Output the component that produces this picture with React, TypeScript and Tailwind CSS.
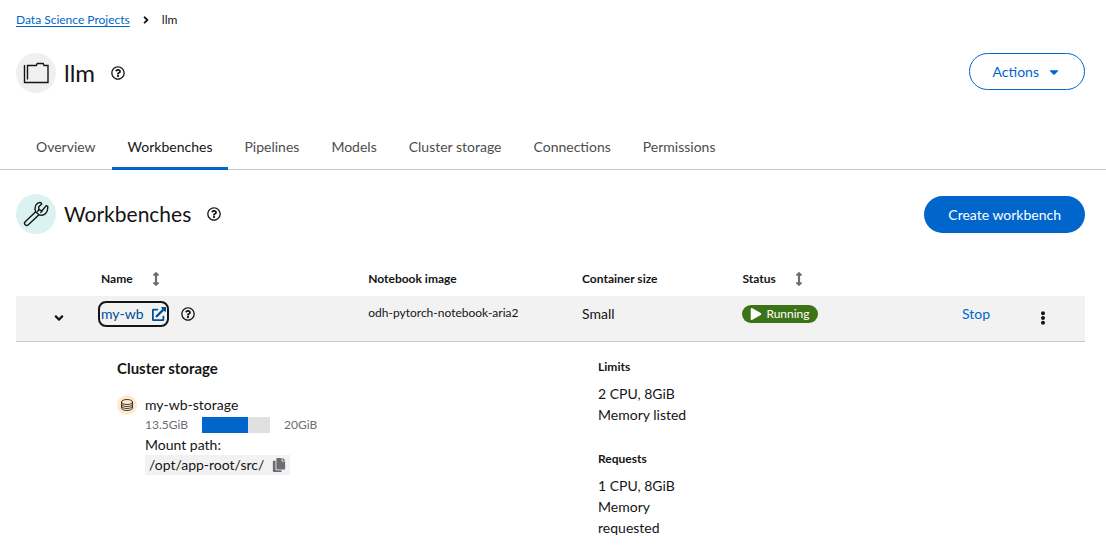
import React, { useState } from 'react';
import {
  FaAngleDown,
  FaAngleRight,
  FaArrowsAltV,
  FaCaretDown,
  FaCopy,
  FaEllipsisV,
  FaExternalLinkAlt,
  FaPlay,
  FaRegQuestionCircle,
} from 'react-icons/fa';

const tabs = [
  'Overview',
  'Workbenches',
  'Pipelines',
  'Models',
  'Cluster storage',
  'Connections',
  'Permissions',
];

const storage = {
  name: 'my-wb-storage',
  used: 13.5,
  size: 20,
  path: '/opt/app-root/src/',
};

const ProjectIcon: React.FC = () => (
  <svg viewBox="0 0 26 26" className="h-[26px] w-[26px]" fill="none" stroke="#151515" strokeWidth="1.4" aria-hidden="true">
    <path d="M1.500 5v17.500h23.500V5.500h-4l-.8-2h-6l-.8 2h-8.900v14" />
  </svg>
);

const WrenchIcon: React.FC = () => (
  <svg viewBox="0 0 26 26" className="h-[26px] w-[26px]" fill="none" stroke="#151515" strokeWidth="1.4" strokeLinejoin="round" strokeLinecap="round" aria-hidden="true">
    <path d="M12.700 10.800 2.200 20.800a2.100 2.100 0 0 0 3.100 3L16 13.800c2.400.8 4.900.4 6.600-1.300s2.400-4.200 2.100-7.100l-1.500-.8-4.200 5.200-3-1.200-.4-2.600 3-3-.3-1.200c-1.300-.6-3.100-.2-4.300 1-2 1.700-2.500 4.700-1.300 8l3.300 3" />
    <path d="m16 8.600-1.300 1.700M19 9.800l-1.200 1.600" />
  </svg>
);

const StorageIcon: React.FC = () => (
  <svg viewBox="0 0 14 14" className="h-3.5 w-3.5" fill="none" stroke="#151515" strokeWidth="0.8" aria-hidden="true">
    <ellipse cx="7" cy="4" rx="5.5" ry="2.5" />
    <path d="M1.500 4v6c0 1.400 2.500 2.500 5.500 2.500s5.500-1.100 5.500-2.500V4M1.500 6c0 1.400 2.500 2.500 5.500 2.500s5.500-1.100 5.500-2.500M1.500 8c0 1.400 2.500 2.500 5.500 2.500s5.500-1.100 5.500-2.500" />
  </svg>
);

const HelpButton: React.FC<{ label: string }> = ({ label }) => (
  <button type="button" aria-label={label} className="flex">
    <FaRegQuestionCircle className="h-3.5 w-3.5" />
  </button>
);

const Header: React.FC = () => (
  <header className="pr-[21px] pl-4">
    <nav aria-label="Breadcrumb" className="flex items-center gap-2.5 pt-2.5 text-xs leading-5">
      <a href="#projects" className="text-[#0066cc] underline underline-offset-2">
        Data Science Projects
      </a>
      <FaAngleRight className="h-3 w-3" />
      <span>llm</span>
    </nav>
    <div className="flex items-start justify-between pt-[23px]">
      <div className="flex items-center gap-2">
        <span className="flex h-10 w-10 items-center justify-center rounded-full bg-[#f0f0f0]">
          <ProjectIcon />
        </span>
        <h1 className="mr-2 text-2xl">llm</h1>
        <HelpButton label="About this project" />
      </div>
      <button
        type="button"
        className="flex items-center gap-2 rounded-full border border-[#0066cc] px-[23px] py-[7px] text-sm leading-[21px] text-[#0066cc]"
      >
        Actions
        <FaCaretDown className="h-3.5 w-3.5" />
      </button>
    </div>
  </header>
);

const Tabs: React.FC = () => {
  const [active, setActive] = useState('Workbenches');

  return (
    <div role="tablist" className="mt-8 flex border-b border-[#c7c7c7] pl-5">
      {tabs.map((tab) => (
        <button
          key={tab}
          type="button"
          role="tab"
          aria-selected={tab === active}
          onClick={() => setActive(tab)}
          className={`-mb-px border-b-3 px-4 pt-3 pb-[10px] text-sm ${
            tab === active ? 'border-[#0066cc]' : 'border-transparent text-[#4d4d4d]'
          }`}
        >
          {tab}
        </button>
      ))}
    </div>
  );
};

const StorageDetails: React.FC = () => (
  <div>
    <h3 className="text-[15px] leading-5 font-bold">Cluster storage</h3>
    <div className="mt-[17px] flex gap-2">
      <span className="flex h-5 w-5 items-center justify-center rounded-full bg-[#ffe8cc]">
        <StorageIcon />
      </span>
      <div className="leading-5">
        <p>{storage.name}</p>
        <div className="flex items-center gap-3.5 text-xs leading-5 text-[#6a6e73]">
          <span>{storage.used}GiB</span>
          <div className="h-4 w-[68px] bg-[#e0e0e0]">
            <div className="h-full bg-[#0066cc]" style={{ width: `${(storage.used / storage.size) * 100}%` }} />
          </div>
          <span>{storage.size}GiB</span>
        </div>
        <p>Mount path:</p>
        <div className="flex w-fit items-center gap-2 bg-[#f2f2f2] px-1">
          <span>{storage.path}</span>
          <button type="button" aria-label="Copy mount path" className="text-[#6a6e73]">
            <FaCopy className="h-3.5 w-3.5" />
          </button>
        </div>
      </div>
    </div>
  </div>
);

const WorkbenchTable: React.FC = () => {
  const [expanded, setExpanded] = useState(true);

  return (
    <table className="w-full table-fixed text-left text-sm">
      <colgroup>
        <col className="w-[69px]" />
        <col className="w-[25%]" />
        <col className="w-[20%]" />
        <col className="w-[15%]" />
        <col />
        <col className="w-20" />
        <col className="w-[59px]" />
      </colgroup>
      <thead>
        <tr className="h-[34px] text-xs">
          <td />
          <th className="px-4 font-bold">
            <button type="button" className="flex items-center gap-4">
              Name
              <FaArrowsAltV className="h-3.5 w-3.5 text-[#6a6e73]" />
            </button>
          </th>
          <th className="px-4 font-bold">Notebook image</th>
          <th className="px-4 font-bold">Container size</th>
          <th className="px-4 font-bold">
            <button type="button" className="flex items-center gap-4">
              Status
              <FaArrowsAltV className="h-3.5 w-3.5 text-[#6a6e73]" />
            </button>
          </th>
          <td />
          <td />
        </tr>
      </thead>
      <tbody>
        <tr className="h-[45px] border-b border-[#c7c7c7] bg-[#f2f2f2] align-top">
          <td className="pt-[15px] pl-9">
            <button
              type="button"
              aria-label="Toggle details"
              aria-expanded={expanded}
              onClick={() => setExpanded(!expanded)}
              className="flex"
            >
              <FaAngleDown className="h-3.5 w-3.5" />
            </button>
          </td>
          <td className="pt-[5px] pr-4 pl-[13px]">
            <div className="flex items-center gap-3">
              <a
                href="#my-wb"
                className="flex items-center gap-2 rounded-lg border-2 border-[#151515] px-px leading-[22px] text-[#004d99]"
              >
                my-wb
                <FaExternalLinkAlt className="h-3.5 w-3.5" />
              </a>
              <HelpButton label="Workbench details" />
            </div>
          </td>
          <td className="px-4 pt-2 text-xs leading-[18px]">odh-pytorch-notebook-aria2</td>
          <td className="px-4 pt-2">Small</td>
          <td className="px-4 pt-[9px]">
            <span className="flex w-fit items-center gap-1 rounded-full bg-[#3d7317] px-2 text-xs leading-[18px] text-white">
              <FaPlay className="h-3 w-3" />
              Running
            </span>
          </td>
          <td className="px-4 pt-2">
            <button type="button" className="text-[#0066cc]">Stop</button>
          </td>
          <td className="pt-[15px] pl-[10px]">
            <button type="button" aria-label="Workbench actions" className="flex">
              <FaEllipsisV className="h-3.5 w-3.5" />
            </button>
          </td>
        </tr>
        {expanded && (
          <tr className="align-top">
            <td />
            <td colSpan={2} className="px-8 pt-4">
              <StorageDetails />
            </td>
            <td className="px-8 pt-[15px] leading-[21px]">
              <h3 className="text-xs leading-5 font-bold">Limits</h3>
              <p className="mt-1.5">2 CPU, 8GiB Memory listed</p>
              <h3 className="mt-6 text-xs leading-5 font-bold">Requests</h3>
              <p className="mt-1.5">1 CPU, 8GiB Memory requested</p>
            </td>
            <td colSpan={3} />
          </tr>
        )}
      </tbody>
    </table>
  );
};

export default function App() {
  return (
    <div className="bg-white font-['Lato',sans-serif] text-[#151515]">
      <Header />
      <Tabs />
      <main className="pt-6 pr-[21px] pl-4">
        <div className="flex items-center justify-between">
          <div className="flex items-center gap-2">
            <span className="flex h-10 w-10 items-center justify-center rounded-full bg-[#daf2f2]">
              <WrenchIcon />
            </span>
            <h2 className="mr-2 text-[21px] leading-7">Workbenches</h2>
            <HelpButton label="About workbenches" />
          </div>
          <button type="button" className="rounded-full bg-[#0066cc] px-6 py-2 text-sm leading-[21px] text-white">
            Create workbench
          </button>
        </div>
        <div className="mt-7">
          <WorkbenchTable />
        </div>
      </main>
    </div>
  );
}
